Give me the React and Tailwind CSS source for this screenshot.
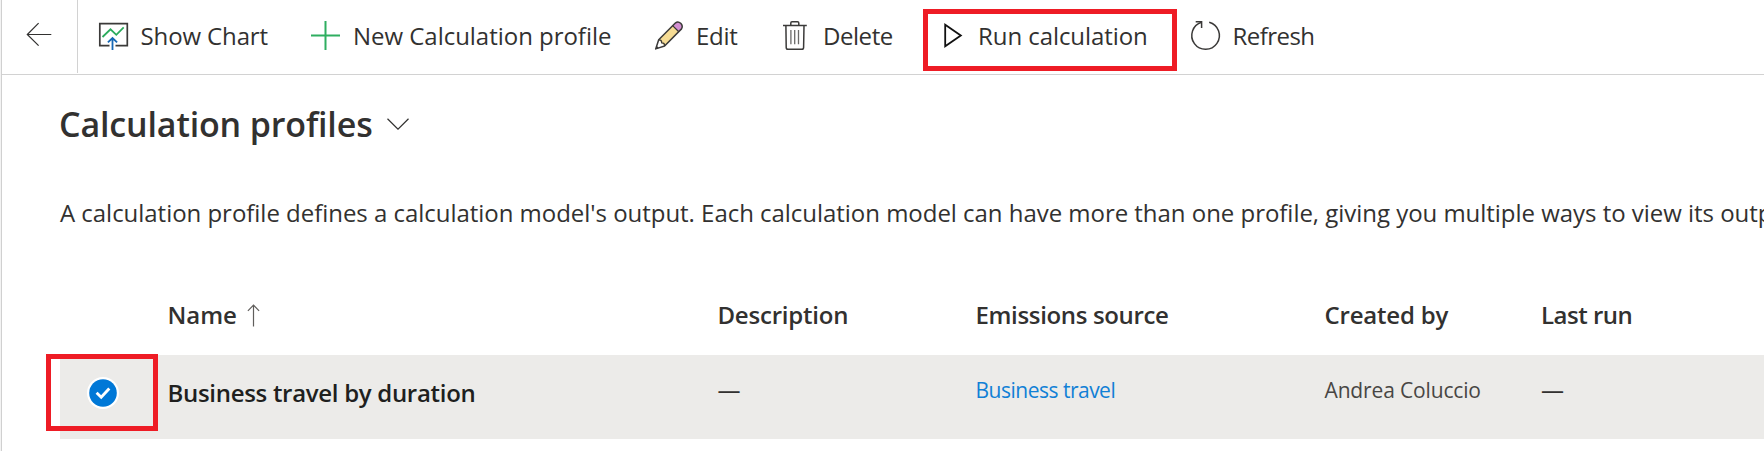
const ShowChartIcon = () => (
  <svg width="30" height="32" viewBox="98 20 30 32" fill="none" className="shrink-0 overflow-visible">
    <path d="M109.5 45.7H99.8V23.6H127.3V45.7H115.5" stroke="#3b3a39" strokeWidth="1.7" />
    <path d="M102.5 37L110.5 29.3L116.3 34.8L123.7 27.4" stroke="#2bab5c" strokeWidth="1.8" />
    <path d="M112.5 50V38.4M107.9 42.4L112.5 38L117.1 42.4" stroke="#1668b5" strokeWidth="1.8" />
  </svg>
);

const PlusIcon = () => (
  <svg width="30" height="32" viewBox="311 20 30 32" fill="none" className="shrink-0 overflow-visible">
    <path d="M311 35.5H340M325.5 21V50" stroke="#2fae60" strokeWidth="2" />
  </svg>
);

const PencilIcon = () => (
  <svg width="30" height="32" viewBox="0 0 30 32" fill="none" strokeLinejoin="round" className="shrink-0 overflow-visible">
    <path d="M4.7 19.8L18.6 5.6L24.8 11.8L10.6 26Z" fill="#f6dc94" />
    <path d="M18.6 5.6L21.6 2.8Q24 .9 26.7 3.3Q29.3 6 27.5 8.9L24.8 11.8Z" fill="#d490d2" />
    <path d="M1.7 28.9L4.7 19.8L21.6 2.8Q24 .9 26.7 3.3Q29.3 6 27.5 8.9L10.6 26Z" stroke="#3b3a39" strokeWidth="1.5" />
    <path d="M4.7 19.8Q8 19.7 7.6 22.9Q10.8 22.6 10.6 26M18.6 5.6L24.8 11.8" stroke="#3b3a39" strokeWidth="1.3" />
    <path d="M1.7 28.9L2.7 25.8L4.9 28Z" fill="#3b3a39" />
  </svg>
);

const TrashIcon = () => (
  <svg width="30" height="32" viewBox="782 20 30 32" fill="none" className="shrink-0 overflow-visible">
    <path d="M783 25.5H806.8M790.8 25.5V23Q790.8 21.7 792 21.7H797.5Q798.8 21.7 798.8 23V25.5" stroke="#3b3a39" strokeWidth="1.5" />
    <path d="M785.9 25.5L786.2 47.5Q786.2 49.3 788 49.3H801.8Q803.6 49.3 803.6 47.5L804 25.5" stroke="#3b3a39" strokeWidth="1.5" />
    <path d="M790.9 30V44.3M794.7 30V44.3M798.5 30V44.3" stroke="#6b6a69" strokeWidth="1.3" />
  </svg>
);

const PlayIcon = () => (
  <svg width="24" height="32" viewBox="943 20 24 32" fill="none" className="shrink-0 overflow-visible">
    <path d="M945.2 24.8V46.2L960.8 35.5Z" stroke="#111" strokeWidth="1.8" />
  </svg>
);

const RefreshIcon = () => (
  <svg width="30" height="32" viewBox="1191 20 30 32" fill="none" className="shrink-0 overflow-visible">
    <path d="M1209.2 22.2A13.8 13.8 0 1 1 1201.6 22.3" stroke="#3b3a39" strokeWidth="1.5" />
    <path d="M1195.7 21.8H1201.6V28" stroke="#3b3a39" strokeWidth="1.5" />
  </svg>
);

const Command = ({ icon, label, box, text }) => (
  <button className={`flex h-8 shrink-0 items-center text-left ${box}`}>
    {icon}
    <span className={`whitespace-nowrap text-[24px] leading-8 ${text}`}>{label}</span>
  </button>
);

const commands = [
  { icon: <ShowChartIcon />, label: "Show Chart", box: "w-[213px]", text: "ml-[12.5px] tracking-[-0.12px]" },
  { icon: <PlusIcon />, label: "New Calculation profile", box: "w-[343px]", text: "ml-3 tracking-[-0.03px]" },
  { icon: <PencilIcon />, label: "Edit", box: "w-[128px]", text: "ml-3 tracking-[-0.3px]" },
  { icon: <TrashIcon />, label: "Delete", box: "w-[161px]", text: "ml-[11px] tracking-[-0.45px]" },
  { icon: <PlayIcon />, label: "Run calculation", box: "w-[248px]", text: "ml-[11px] tracking-[-0.07px]" },
  { icon: <RefreshIcon />, label: "Refresh", box: "w-[140px]", text: "ml-[11.5px] tracking-[-0.55px]" },
];

const columns = "grid grid-cols-[107.5px_550px_258px_349px_216.5px_1fr]";

export default function App() {
  return (
    <div className="relative flex h-[451px] w-[1764px] overflow-hidden bg-white font-['Open_Sans','Noto_Sans',sans-serif] text-[#323130]">
      <div className="w-0.5 shrink-0 border-r border-[#d0d0d0] bg-[#f3f3f3]" />
      <div className="flex min-w-0 flex-1 flex-col">
        <header className="flex h-[75px] shrink-0 border-b border-[#d2d2d2]">
          <button className="flex h-[73px] w-[76px] shrink-0 border-r border-[#d2d2d2] pt-[22px] pl-6">
            <svg width="26" height="24" viewBox="26 22 26 24" fill="none">
              <path d="M51.3 34.5H27.4M38.6 23.2L27.3 34.5L38.6 45.6" stroke="#323130" strokeWidth="1.2" />
            </svg>
          </button>
          <nav className="flex pt-5 pl-5">
            {commands.map((c) => (
              <Command key={c.label} {...c} />
            ))}
          </nav>
        </header>

        <main className="flex flex-col pl-[58px]">
          <div className="-ml-px mt-[29px] flex h-10 items-center">
            <h1 className="whitespace-nowrap text-[34px] leading-10 font-semibold tracking-[-0.15px]">Calculation profiles</h1>
            <svg width="22" height="12" viewBox="0 0 22 12" fill="none" className="ml-3.5">
              <path d="M.5 .8L11 11.2L21.5 .8" stroke="#323130" strokeWidth="1.2" />
            </svg>
          </div>
          <p className="mt-[53px] whitespace-nowrap text-[24px] leading-8 tracking-[-0.032px]">
            A calculation profile defines a calculation model's output. Each calculation model can have more than one profile, giving you multiple ways to view its output.
          </p>

          <div className={`mt-[70px] mb-6 h-8 whitespace-nowrap text-[24px] leading-8 font-semibold ${columns}`}>
            <span />
            <span className="flex items-center tracking-[0px]">
              Name
              <svg width="13" height="23" viewBox="0 0 13 23" fill="none" className="ml-2.5">
                <path d="M6.5 22.5V1M.9 6.8L6.5 1.1L12.1 6.8" stroke="#605e5c" strokeWidth="1.2" />
              </svg>
            </span>
            <span className="tracking-[-0.22px]">Description</span>
            <span className="tracking-[-0.34px]">Emissions source</span>
            <span className="tracking-[-0.2px]">Created by</span>
            <span className="tracking-[-0.5px]">Last run</span>
          </div>

          <div className={`h-[84px] whitespace-nowrap bg-[#ecebe9] text-[21px] leading-[30px] ${columns}`}>
            <span className="flex pt-[22px] pl-[26.5px]">
              <svg width="32" height="32" viewBox="-16 -16 32 32" fill="none">
                <circle r="16" fill="#fff" />
                <circle r="13.8" fill="#0078d7" />
                <path d="M-6.4 -.2L-1.8 4.2L6.3 -4.4" stroke="#fff" strokeWidth="2.9" />
              </svg>
            </span>
            <span className="pt-[22px] text-[24px] leading-8 font-semibold tracking-[-0.3px] text-[#201f1e]">Business travel by duration</span>
            <span className="pt-5 text-[23px]">—</span>
            <a className="pt-5 tracking-[-0.5px] text-[#1180d6]">Business travel</a>
            <span className="pt-5 tracking-[-0.15px] text-[#484644]">Andrea Coluccio</span>
            <span className="pt-5 text-[23px]">—</span>
          </div>
        </main>
      </div>
      <div className="absolute top-[9px] left-[923px] h-[62px] w-[254px] border-5 border-[#ee1c25]" />
      <div className="absolute top-[354px] left-[46px] h-[77px] w-[112px] border-5 border-[#ee1c25]" />
    </div>
  );
}
